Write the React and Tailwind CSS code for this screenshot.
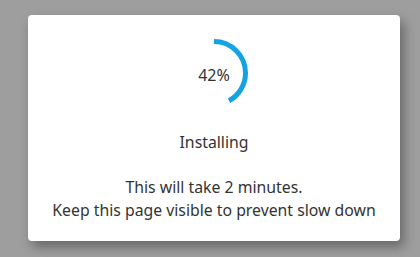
import React from 'react';

const ProgressRing = ({ value }) => {
    const r = 31.5;
    const c = 2 * Math.PI * r;
    return (
        <div className="relative w-[70px] h-[70px]">
            <svg width="70" height="70" viewBox="0 0 70 70" className="-rotate-90">
                <circle
                    cx="35"
                    cy="35"
                    r={r}
                    fill="none"
                    stroke="#13a3e0"
                    strokeWidth="5"
                    strokeDasharray={`${(c * value) / 100} ${c}`}
                />
            </svg>
            <div className="absolute inset-0 flex items-center justify-center pt-[3px] text-[16px] text-[#333]">
                {value}%
            </div>
        </div>
    );
};

export default function App() {
    return (
        <div className="w-[420px] h-[257px] bg-[#9e9e9e] pt-[15px] pl-[28px] font-['Noto_Sans',sans-serif]">
            <div className="w-[372px] h-[226px] bg-white rounded-[4px] shadow-[4px_6px_12px_rgba(0,0,0,0.35)] flex flex-col items-center pt-[23px] text-[#333]">
                <ProgressRing value={42} />
                <div className="mt-[23px] text-[15.8px] leading-[23px]">Installing</div>
                <div className="mt-[22px] text-[15.8px] leading-[23px] text-center">
                    <div>This will take 2 minutes.</div>
                    <div>Keep this page visible to prevent slow down</div>
                </div>
            </div>
        </div>
    );
}
